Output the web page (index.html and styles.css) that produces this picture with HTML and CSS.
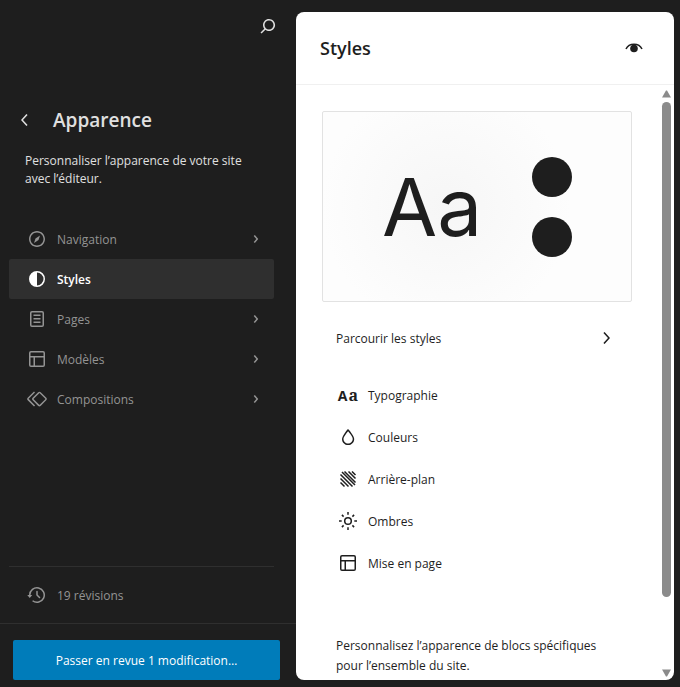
FILE: index.html
```
<!DOCTYPE html>
<html lang="fr">
<head>
    <meta charset="UTF-8">
    <meta name="viewport" content="width=device-width, initial-scale=1.0">
    <title>Apparence - Styles</title>
    <link rel="stylesheet" href="styles.css">
</head>
<body>

    <aside class="sidebar">
        <div class="topbar">
            <button type="button" class="icon-btn" aria-label="Rechercher">
                <svg class="icon" viewBox="0 0 24 24"><path d="M13 5c-3.300 0-6 2.700-6 6 0 1.400.5 2.700 1.300 3.700l-3.800 3.800 1.100 1.100 3.800-3.800c1 .8 2.300 1.300 3.700 1.300 3.300 0 6-2.700 6-6S16.300 5 13 5zm0 10.500c-2.500 0-4.500-2-4.500-4.500s2-4.500 4.500-4.500 4.500 2 4.500 4.500-2 4.500-4.500 4.500z"/></svg>
            </button>
        </div>

        <div class="heading">
            <button type="button" class="icon-btn" aria-label="Retour">
                <svg class="icon" viewBox="0 0 24 24"><path d="M14.600 7l-1.200-1L8 12l5.400 6 1.200-1-4.600-5z"/></svg>
            </button>
            <h1>Apparence</h1>
        </div>
        <p class="description">Personnaliser l’apparence de votre site avec l’éditeur.</p>

        <nav>
            <ul class="menu">
                <li><a href="#navigation">
                    <svg class="icon" viewBox="0 0 24 24"><path d="M12 4c-4.400 0-8 3.600-8 8s3.600 8 8 8 8-3.600 8-8-3.600-8-8-8zm0 14.500c-3.600 0-6.500-2.900-6.500-6.500S8.400 5.500 12 5.500s6.500 2.900 6.500 6.500-2.900 6.500-6.500 6.500zM9 16l4.500-3L15 8.400l-4.500 3L9 16z"/></svg>
                    <span class="label">Navigation</span>
                    <svg class="icon arrow" viewBox="0 0 24 24"><path d="M10.860 8.040l3.420 3.990-3.420 3.990-1.140-.98 2.580-3.010-2.580-3.010z"/></svg>
                </a></li>
                <li><a href="#styles" class="active" aria-current="page">
                    <svg class="icon" viewBox="0 0 24 24"><path fill-rule="evenodd" d="M20 12a8 8 0 1 1-16 0 8 8 0 0 1 16 0Zm-1.500 0a6.500 6.500 0 0 1-6.500 6.500v-13a6.500 6.500 0 0 1 6.500 6.500Z"/></svg>
                    <span class="label">Styles</span>
                </a></li>
                <li><a href="#pages">
                    <svg class="icon" viewBox="0 0 24 24"><path fill-rule="evenodd" d="M15.500 7.500h-7V9h7V7.500Zm-7 3.500h7v1.500h-7V11Zm7 3.500h-7V16h7v-1.500ZM17 4H7a2 2 0 0 0-2 2v12a2 2 0 0 0 2 2h10a2 2 0 0 0 2-2V6a2 2 0 0 0-2-2ZM7 5.500h10a.5.5 0 0 1 .5.5v12a.5.5 0 0 1-.5.5H7a.5.5 0 0 1-.5-.5V6a.5.5 0 0 1 .5-.5Z"/></svg>
                    <span class="label">Pages</span>
                    <svg class="icon arrow" viewBox="0 0 24 24"><path d="M10.860 8.040l3.420 3.990-3.420 3.990-1.140-.98 2.580-3.010-2.580-3.010z"/></svg>
                </a></li>
                <li><a href="#modeles">
                    <svg class="icon" viewBox="0 0 24 24"><path fill-rule="evenodd" d="M18 5.500H6a.5.5 0 0 0-.5.5v3h13V6a.5.5 0 0 0-.5-.5zm.5 5H10v8h8a.5.5 0 0 0 .5-.5v-7.500zm-10 0h-3V18a.5.5 0 0 0 .5.5h2.500v-8zM6 4h12a2 2 0 0 1 2 2v12a2 2 0 0 1-2 2H6a2 2 0 0 1-2-2V6a2 2 0 0 1 2-2z"/></svg>
                    <span class="label">Modèles</span>
                    <svg class="icon arrow" viewBox="0 0 24 24"><path d="M10.860 8.040l3.420 3.990-3.420 3.990-1.140-.98 2.580-3.010-2.580-3.010z"/></svg>
                </a></li>
                <li><a href="#compositions">
                    <svg class="icon" viewBox="0 0 24 24"><path d="M21.300 10.800l-5.600-5.600c-.7-.7-1.800-.7-2.500 0l-5.600 5.600c-.7.7-.7 1.800 0 2.500l5.600 5.600c.3.3.8.5 1.200.5s.9-.2 1.200-.5l5.600-5.600c.8-.7.8-1.900.1-2.500zm-1 1.400l-5.600 5.600c-.1.1-.3.1-.4 0l-5.600-5.600c-.1-.1-.1-.3 0-.4l5.600-5.600s.1-.1.2-.1.1 0 .2.1l5.600 5.600c.1.1.1.3 0 .4zm-16.600-.4L10 5.500l-1-1-6.300 6.300c-.7.7-.7 1.800 0 2.500L9 19.500l1.100-1.100-6.300-6.300c-.2 0-.2-.2-.1-.3z"/></svg>
                    <span class="label">Compositions</span>
                    <svg class="icon arrow" viewBox="0 0 24 24"><path d="M10.860 8.040l3.420 3.990-3.420 3.990-1.140-.98 2.580-3.010-2.580-3.010z"/></svg>
                </a></li>
            </ul>
        </nav>

        <div class="revisions">
            <a href="#revisions">
                <svg class="icon" viewBox="0 0 24 24"><path d="M5.500 12h1.750l-2.500 3-2.500-3H4a8 8 0 1 1 3.134 6.350l.907-1.194A6.500 6.500 0 1 0 5.500 12zm9.530 1.970l-2.280-2.280V8.500a.75.75 0 0 0-1.500 0V12a.747.747 0 0 0 .218.529l2.502 2.502a.75.75 0 1 0 1.060-1.061z"/></svg>
                <span class="label">19 révisions</span>
            </a>
        </div>

        <div class="save">
            <button type="button" class="save-btn">Passer en revue 1 modification…</button>
        </div>
    </aside>

    <main class="panel">
        <header class="panel-header">
            <h2>Styles</h2>
            <button type="button" class="icon-btn" aria-label="Livre de styles">
                <svg class="icon" viewBox="0 0 24 24"><path d="M4 13c3-6.500 13-6.500 16 0" fill="none" stroke="currentColor" stroke-width="1.500"/><circle cx="12" cy="12.500" r="3.800"/></svg>
            </button>
        </header>

        <div class="panel-body">
            <div class="content">
                <div class="preview">
                    <span class="preview-text">Aa</span>
                    <div class="preview-colors">
                        <span class="dot"></span>
                        <span class="dot"></span>
                    </div>
                </div>

                <a href="#parcourir" class="browse">
                    <span class="label">Parcourir les styles</span>
                    <svg class="icon" viewBox="0 0 24 24"><path d="M10.600 6L9.400 7l4.600 5-4.600 5 1.200 1 5.400-6z"/></svg>
                </a>

                <ul class="options">
                    <li><a href="#typographie">
                        <span class="icon icon-type" aria-hidden="true">A<span class="serif">a</span></span>
                        <span class="label">Typographie</span>
                    </a></li>
                    <li><a href="#couleurs">
                        <svg class="icon" viewBox="0 0 24 24"><path d="M17.200 10.900c-.5-1-1.200-2.100-2.100-3.200-.6-.9-1.300-1.700-2.100-2.600L12 4l-1 1.100c-.6.9-1.300 1.700-2 2.600-.8 1.200-1.500 2.300-2 3.200-.6 1.200-1 2.200-1 3 0 3.400 2.700 6.100 6.100 6.100s6.100-2.700 6.100-6.100c0-.8-.3-1.800-1-3zm-5.100 7.600c-2.500 0-4.600-2.100-4.600-4.600 0-.3.1-1 .8-2.300.5-.9 1.100-1.900 2-3.100.7-.9 1.300-1.700 1.800-2.300.7.8 1.300 1.600 1.800 2.300.8 1.100 1.500 2.200 2 3.100.7 1.300.8 2 .8 2.300 0 2.500-2.100 4.600-4.600 4.600z"/></svg>
                        <span class="label">Couleurs</span>
                    </a></li>
                    <li><a href="#arriere-plan">
                        <svg class="icon line" viewBox="0 0 24 24"><path d="M4.500 15.500L8.500 19.500M4.500 11.500l8 8M4.500 7.500l12 12M6 5l13 13M8.500 4.500l11 11M12.500 4.500l7 7M16 4.500l3.500 3.500"/></svg>
                        <span class="label">Arrière-plan</span>
                    </a></li>
                    <li><a href="#ombres">
                        <svg class="icon line" viewBox="0 0 24 24"><circle cx="12" cy="12" r="3.300"/><path d="M12 3v2.700M12 18.300V21M3 12h2.700M18.300 12H21M5.900 5.900l1.700 1.700M16.400 16.400l1.700 1.700M5.900 18.100l1.700-1.700M16.400 7.600l1.700-1.700"/></svg>
                        <span class="label">Ombres</span>
                    </a></li>
                    <li><a href="#mise-en-page">
                        <svg class="icon" viewBox="0 0 24 24"><path fill-rule="evenodd" d="M18 5.500H6a.5.5 0 0 0-.5.5v3h13V6a.5.5 0 0 0-.5-.5zm.5 5H10v8h8a.5.5 0 0 0 .5-.5v-7.500zm-10 0h-3V18a.5.5 0 0 0 .5.5h2.500v-8zM6 4h12a2 2 0 0 1 2 2v12a2 2 0 0 1-2 2H6a2 2 0 0 1-2-2V6a2 2 0 0 1 2-2z"/></svg>
                        <span class="label">Mise en page</span>
                    </a></li>
                </ul>

                <p class="blocks">Personnalisez l’apparence de blocs spécifiques pour l’ensemble du site.</p>
            </div>

            <div class="scrollbar" aria-hidden="true">
                <svg class="scroll-arrow" viewBox="0 0 9 8"><path d="M4 0.500h1L9 7.500H0z"/></svg>
                <div class="track"><div class="thumb"></div></div>
                <svg class="scroll-arrow" viewBox="0 0 9 8"><path d="M4 7.500h1L9 0.500H0z"/></svg>
            </div>
        </div>
    </main>

</body>
</html>
```
FILE: styles.css
```
* {
    box-sizing: border-box;
}

body {
    font-family: 'Open Sans', 'Noto Sans', sans-serif;
    font-size: 12px;
    line-height: 20px;
    background: #1e1e1e;
    color: #e0e0e0;
    margin: 0;
    min-height: 100vh;
    display: grid;
    grid-template-columns: 296px 1fr;
}

h1, h2, p, ul {
    margin: 0;
    padding: 0;
}

ul {
    list-style: none;
}

a {
    color: inherit;
    text-decoration: none;
}

button {
    font: inherit;
    color: inherit;
    border: none;
    cursor: pointer;
}

.icon {
    width: 24px;
    height: 24px;
    flex: none;
    display: block;
    fill: currentColor;
}

.line {
    fill: none;
    stroke: currentColor;
    stroke-width: 1.5;
}

.icon-btn {
    padding: 0;
    background: none;
}

.label {
    padding-top: 2px;
}

/* sidebar */
.sidebar {
    display: flex;
    flex-direction: column;
}

.topbar {
    display: flex;
    justify-content: flex-end;
    padding: 14px 16px 0 0;
}

.heading {
    display: flex;
    align-items: center;
    gap: 16px;
    margin-top: 68px;
    padding-left: 13px;
}

h1 {
    font-size: 19px;
    line-height: 28px;
    font-weight: 600;
}

.description {
    line-height: 18px;
    padding: 18px 40px 0 25px;
}

.menu {
    margin: 31px 22px 0 9px;
    color: #949494;
}

.menu a {
    display: flex;
    align-items: center;
    gap: 8px;
    height: 40px;
    padding: 0 6px 0 16px;
    border-radius: 2px;
}

.menu .active {
    background: #2f2f2f;
    color: #fff;
    font-weight: 600;
}

.arrow {
    margin-left: auto;
}

.revisions {
    margin: auto 22px 0 9px;
    border-top: 1px solid #2f2f2f;
    color: #949494;
}

.revisions a {
    display: flex;
    align-items: center;
    gap: 8px;
    height: 56px;
    padding-left: 16px;
}

.save {
    border-top: 1px solid #2f2f2f;
    padding: 16px 16px 7px 13px;
}

.save-btn {
    width: 100%;
    height: 40px;
    padding-top: 3px;
    border-radius: 2px;
    background: #007cba;
    color: #fff;
}

/* styles panel */
.panel {
    margin: 12px 6px 7px 0;
    background: #fff;
    color: #1e1e1e;
    border-radius: 8px;
    display: flex;
    flex-direction: column;
}

.panel-header {
    display: flex;
    align-items: center;
    justify-content: space-between;
    height: 73px;
    padding: 0 28px 0 24px;
    border-bottom: 1px solid #f0f0f0;
}

h2 {
    font-size: 18px;
    line-height: 28px;
    font-weight: 600;
}

.panel-body {
    flex: 1;
    display: flex;
}

.content {
    flex: 1;
    padding: 26px 27px 4px 26px;
}

.preview {
    display: flex;
    align-items: center;
    justify-content: center;
    gap: 50px;
    height: 191px;
    border: 1px solid #e2e2e2;
    border-radius: 2px;
    background: radial-gradient(circle at 40% 50%, #f6f6f6, #fdfdfd 60%);
}

.preview-text {
    font-family: Inter, sans-serif;
    font-size: 80px;
    line-height: 96px;
    font-weight: 400;
}

.preview-colors {
    display: flex;
    flex-direction: column;
    gap: 20px;
}

.dot {
    width: 40px;
    height: 40px;
    border-radius: 50%;
    background: #1e1e1e;
}

.browse {
    display: flex;
    align-items: center;
    justify-content: space-between;
    height: 40px;
    margin-top: 16px;
    padding: 0 14px;
}

.options {
    margin-top: 16px;
    padding-left: 14px;
}

.options a {
    display: flex;
    align-items: center;
    gap: 8px;
    height: 42px;
}

.icon-type {
    font-size: 14px;
    line-height: 24px;
    font-weight: 700;
    text-align: center;
}

.serif {
    font-family: 'Noto Serif', 'Liberation Serif', serif;
    font-size: 16px;
    padding-left: 1px;
}

.blocks {
    margin-top: 52px;
    padding: 0 14px;
}

.scrollbar {
    display: flex;
    flex-direction: column;
    align-items: center;
    gap: 4px;
    width: 15px;
    padding: 5px 0 3px;
}

.scroll-arrow {
    width: 9px;
    height: 8px;
    fill: #8b8b8b;
}

.track {
    flex: 1;
}

.thumb {
    width: 9px;
    height: 88%;
    border-radius: 5px;
    background: #8b8b8b;
}
```
